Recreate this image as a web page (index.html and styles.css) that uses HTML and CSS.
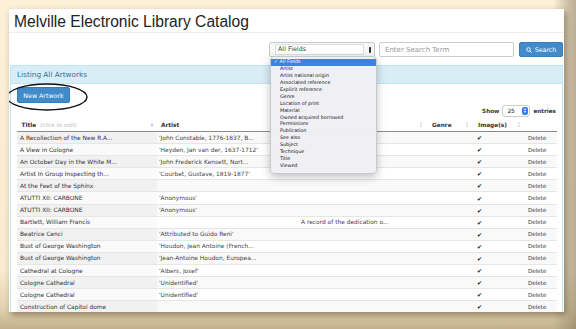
FILE: index.html
```html
<!DOCTYPE html>
<html lang="en">
<head>
  <meta charset="UTF-8" />
  <title>Melville Electronic Library Catalog</title>
  <link rel="stylesheet" href="styles.css">
</head>
<body>
  <div class="page">
    <header class="page-head">
      <h1>Melville Electronic Library Catalog</h1>
    </header>

    <form class="search">
      <div class="field-select">
        <span class="field-value">All Fields</span>
        <span class="field-arrow"></span>
      </div>
      <input class="search-input" type="text" placeholder="Enter Search Term">
      <button class="btn search-btn" type="button">
        <svg width="6" height="6" viewBox="0 0 12 12"><circle cx="5" cy="5" r="3.6" fill="none" stroke="#fff" stroke-width="1.8"/><line x1="7.6" y1="7.6" x2="11" y2="11" stroke="#fff" stroke-width="2"/></svg>
        Search
      </button>
    </form>

    <!-- open field picker -->
    <ul class="field-menu">
      <li class="picked">✓ All Fields</li>
      <li>Artist</li>
      <li>Artist national origin</li>
      <li>Associated reference</li>
      <li>Explicit reference</li>
      <li>Genre</li>
      <li>Location of print</li>
      <li>Material</li>
      <li>Owned acquired borrowed</li>
      <li>Permissions</li>
      <li>Publication</li>
      <li>See also</li>
      <li>Subject</li>
      <li>Technique</li>
      <li>Title</li>
      <li>Viewed</li>
    </ul>

    <section class="panel">
      <div class="panel-heading">Listing All Artworks</div>
      <div class="panel-body">
        <div class="toolbar">
          <button class="btn new-btn" type="button">New Artwork</button>
          <svg class="ring" width="84" height="30" viewBox="0 0 84 30"><ellipse cx="42" cy="15" rx="40" ry="13" fill="none" stroke="#111" stroke-width="1.4"/></svg>
        </div>

        <div class="length">
          Show
          <span class="length-select">25<span class="spin"><i class="up"></i><i class="down"></i></span></span>
          entries
        </div>

        <table class="works">
          <colgroup>
            <col class="c-title"><col class="c-artist"><col class="c-desc"><col class="c-genre"><col class="c-img"><col class="c-del">
          </colgroup>
          <thead>
            <tr>
              <th class="t-title"><div class="th-in"><span>Title <em>(click to edit)</em></span><span class="asc"></span></div></th>
              <th class="t-artist"><div class="th-in"><span>Artist</span><span class="both"></span></div></th>
              <th><div class="th-in"><span></span><span class="both"></span></div></th>
              <th class="t-pad"><div class="th-in"><span>Genre</span><span class="both"></span></div></th>
              <th class="t-pad"><div class="th-in"><span>Image(s)</span><span class="both"></span></div></th>
              <th></th>
            </tr>
          </thead>
          <tbody>
            <tr><td>A Recollection of the New R.A...</td><td>'John Constable, 1776-1837, B...</td><td></td><td></td><td class="chk">✔</td><td class="del">Delete</td></tr>
            <tr><td>A View in Cologne</td><td>'Heyden, Jan van der, 1637-1712'</td><td></td><td></td><td class="chk">✔</td><td class="del">Delete</td></tr>
            <tr><td>An October Day in the White M...</td><td>'John Frederick Kensett, Nort...</td><td></td><td></td><td class="chk">✔</td><td class="del">Delete</td></tr>
            <tr><td>Artist In Group Inspecting th...</td><td>'Courbet, Gustave, 1819-1877'</td><td></td><td></td><td class="chk">✔</td><td class="del">Delete</td></tr>
            <tr><td>At the Feet of the Sphinx</td><td></td><td></td><td></td><td class="chk">✔</td><td class="del">Delete</td></tr>
            <tr><td>ATUTTI XII: CARBONE</td><td>'Anonymous'</td><td></td><td></td><td class="chk">✔</td><td class="del">Delete</td></tr>
            <tr><td>ATUTTI XII: CARBONE</td><td>'Anonymous'</td><td></td><td></td><td class="chk">✔</td><td class="del">Delete</td></tr>
            <tr><td>Bartlett, William Francis</td><td></td><td class="desc">A record of the dedication o...</td><td></td><td class="chk">✔</td><td class="del">Delete</td></tr>
            <tr><td>Beatrice Cenci</td><td>'Attributed to Guido Reni'</td><td></td><td></td><td class="chk">✔</td><td class="del">Delete</td></tr>
            <tr><td>Bust of George Washington</td><td>'Houdon, Jean Antoine (French...</td><td></td><td></td><td class="chk">✔</td><td class="del">Delete</td></tr>
            <tr><td>Bust of George Washington</td><td>'Jean-Antoine Houdon, Europea...</td><td></td><td></td><td class="chk">✔</td><td class="del">Delete</td></tr>
            <tr><td>Cathedral at Cologne</td><td>'Albers, Josef'</td><td></td><td></td><td class="chk">✔</td><td class="del">Delete</td></tr>
            <tr><td>Cologne Cathedral</td><td>'Unidentified'</td><td></td><td></td><td class="chk">✔</td><td class="del">Delete</td></tr>
            <tr><td>Cologne Cathedral</td><td>'Unidentified'</td><td></td><td></td><td class="chk">✔</td><td class="del">Delete</td></tr>
            <tr><td>Construction of Capitol dome</td><td></td><td></td><td></td><td class="chk">✔</td><td class="del">Delete</td></tr>
          </tbody>
        </table>
      </div>
    </section>
  </div>
</body>
</html>
```

FILE: styles.css
```css
html, body {
  margin: 0;
  height: 329px;
  overflow: hidden;
}
body {
  font-family: 'DejaVu Sans', Verdana, sans-serif;
  color: #333;
  background:
    linear-gradient(to right, rgba(0,0,0,0) 96%, rgba(150,138,110,.45) 98.5%, rgba(135,120,92,.55) 100%),
    linear-gradient(to bottom, #fdf0d9 0%, #f9ebcf 82%, #e2d1ae 94%, #c3b08b 100%);
}
.page {
  position: relative;
  margin: 9px 12px 0 9px;
  height: 303px;
  background: #fff;
  overflow: hidden;
  box-shadow: 2px 3px 6px rgba(60,45,20,.45);
}
.page-head {
  padding: 4px 5px 0;
  border-bottom: 1px solid #eee;
}
.page-head h1 {
  margin: 0;
  font-family: 'Liberation Sans', Arial, sans-serif;
  font-weight: normal;
  font-size: 15.6px;
  line-height: 18px;
  padding-bottom: 1px;
  color: #222;
}

/* search row */
.search {
  display: flex;
  justify-content: flex-end;
  margin: 9px 1px 0 0;
  height: 15px;
}
.field-select {
  display: flex;
  align-items: center;
  width: 106px;
  box-sizing: border-box;
  border: 1px solid #c9c9c9;
  border-radius: 2px;
  padding: 0 3px 0 5px;
  background: #f7f7f7;
}
.field-value {
  flex: 1;
  border: 1px solid #ddd;
  background: #fff;
  height: 9px;
  font-size: 6.4px;
  line-height: 9px;
  padding-left: 2px;
  color: #444;
}
.field-arrow {
  width: 2px;
  height: 6px;
  margin-left: 5px;
  background: #333;
  border-radius: 1px 1px 2px 2px;
}
.search-input {
  width: 135px;
  margin-left: 4px;
  box-sizing: border-box;
  border: 1px solid #ccc;
  border-radius: 2px;
  padding: 0 5px;
  font-family: 'DejaVu Sans', sans-serif;
  font-size: 7px;
}
.search-input::placeholder {
  color: #999;
}
.btn {
  font-family: 'DejaVu Sans', sans-serif;
  color: #fff;
  background: #428bca;
  border: 1px solid #357ebd;
  border-radius: 2px;
  padding: 0;
  cursor: pointer;
}
.search-btn {
  width: 44px;
  margin-left: 5px;
  font-size: 6.3px;
  display: flex;
  align-items: center;
  justify-content: center;
  gap: 3px;
}

/* open native picker */
.field-menu {
  position: absolute;
  left: 261px;
  top: 47px;
  width: 105px;
  margin: 0;
  padding: 2px 0 3px;
  list-style: none;
  background: rgba(240,240,244,.97);
  border: 1px solid #c8c8cc;
  border-radius: 4px;
  box-shadow: 0 3px 8px rgba(0,0,0,.25);
  font-size: 4.8px;
  line-height: 6.93px;
  color: #111;
  z-index: 2;
}
.field-menu li {
  padding-left: 9px;
}
.field-menu li.picked {
  background: #3d7ef0;
  color: #fff;
  padding-left: 3px;
}

/* panel */
.panel {
  margin: 8px 1px 0;
  border: 1px solid #bce8f1;
  border-bottom: none;
}
.panel-heading {
  background: #d9edf7;
  color: #31708f;
  height: 17px;
  line-height: 17px;
  font-size: 7.3px;
  padding-left: 6px;
  border-bottom: 1px solid #bce8f1;
}
.panel-body {
  padding: 3px 5px 0 6px;
}
.toolbar {
  position: relative;
  display: flex;
  height: 16px;
}
.new-btn {
  width: 53px;
  height: 16px;
  font-size: 6.3px;
}
.ring {
  position: absolute;
  left: -12px;
  top: -5px;
}
.length {
  display: flex;
  justify-content: flex-end;
  align-items: center;
  gap: 3px;
  height: 13px;
  margin-top: 1px;
  padding-right: 1px;
  font-size: 5.7px;
  font-weight: bold;
}
.length-select {
  display: flex;
  align-items: center;
  justify-content: space-between;
  width: 28px;
  height: 12px;
  box-sizing: border-box;
  border: 1px solid #ccc;
  border-radius: 3px;
  padding: 0 1px 0 4px;
  font-weight: normal;
  font-size: 5.9px;
  color: #222;
}
.spin {
  width: 6px;
  height: 8px;
  background: #3a80f2;
  border-radius: 2px;
  display: flex;
  flex-direction: column;
  align-items: center;
  justify-content: center;
  gap: 1px;
}
.spin i {
  width: 0;
  height: 0;
  border-left: 1.5px solid transparent;
  border-right: 1.5px solid transparent;
}
.spin .up { border-bottom: 2px solid #fff; }
.spin .down { border-top: 2px solid #fff; }

/* table */
.works {
  width: 540px;
  table-layout: fixed;
  border-collapse: collapse;
  font-size: 5.9px;
}
.c-title { width: 140px; }
.c-artist { width: 140px; }
.c-desc { width: 128px; }
.c-genre { width: 46px; }
.c-img { width: 52px; }
.c-del { width: 34px; }
.works th {
  height: 14.5px;
  box-sizing: border-box;
  padding: 1px 3px 0 4px;
  text-align: left;
  font-size: 5.8px;
  color: #333;
  border-bottom: 1px solid #8c8c8c;
}
.works th.t-title { padding-left: 4.5px; }
.works th.t-pad { padding-left: 7px; }
.th-in {
  display: flex;
  justify-content: space-between;
  align-items: center;
}
.th-in em {
  font-weight: normal;
  color: #bbb;
  font-size: 5.6px;
  margin-left: 2px;
}
.asc {
  width: 0;
  height: 0;
  border-left: 1.6px solid transparent;
  border-right: 1.6px solid transparent;
  border-bottom: 3px solid #9aa0ee;
  margin-right: 1px;
}
.both {
  width: 2px;
  height: 5px;
  background: linear-gradient(#ddd 0 40%, transparent 40% 60%, #ddd 60%);
  border-radius: 1px;
}
.works td {
  height: 12.1px;
  box-sizing: border-box;
  padding: 0 2px 0 3px;
  border-bottom: 1px solid #e6e6e6;
  white-space: nowrap;
  overflow: hidden;
  color: #333;
}
.works td:nth-child(2) { padding-left: 2px; color: #444; }
.works td.desc { padding-left: 4px; color: #444; }
.works tbody tr:nth-child(odd) td { background: #f9f9f9; }
.works tbody tr:nth-child(odd) td:first-child { background: #f1f1f1; }
.works tbody tr:nth-child(even) td:first-child { background: #fafafa; }
.works td.chk {
  padding-left: 6px;
  color: #111;
  font-size: 6px;
}
.works td.del {
  padding-left: 5px;
  color: #333;
  font-size: 5.6px;
}
```
